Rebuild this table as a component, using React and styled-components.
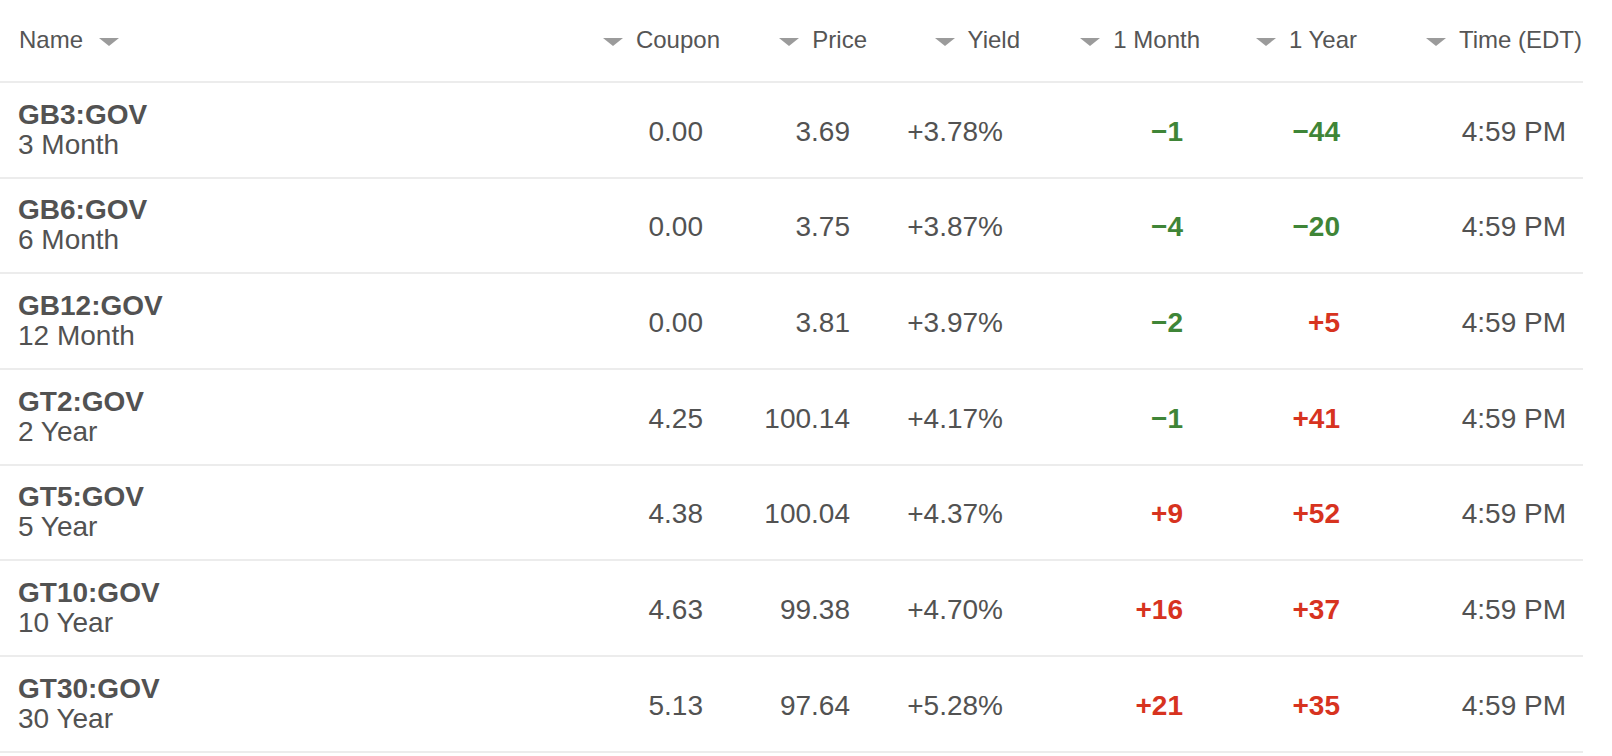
import styled, { createGlobalStyle } from "styled-components";

const GlobalStyle = createGlobalStyle`
   html, body {
      margin: 0;
      padding: 0;
      background: #fff;
   }
   body {
      font-family: "Liberation Sans", Arial, Helvetica, sans-serif;
      color: #525252;
   }
`;

const COLUMNS = "580px 140px 147px 153px 180px 157px 226px";

const Table = styled.div`
   width: 1583px;
`;

const HeaderRow = styled.div`
   display: grid;
   grid-template-columns: ${COLUMNS};
   height: 83px;
   box-sizing: border-box;
   border-bottom: 2px solid #ececec;
`;

const HeaderCell = styled.div`
   display: flex;
   align-items: center;
   justify-content: ${(p) => (p.$left ? "flex-start" : "flex-end")};
   padding: 0 ${(p) => (p.$last ? "1px" : "0")} 1px ${(p) => (p.$left ? "19px" : "0")};
   font-size: 24px;
   line-height: 28px;
   color: #555;
   white-space: nowrap;
`;

const SortArrow = styled.svg`
   width: 20px;
   height: 8px;
   flex: none;
   margin-right: ${(p) => (p.$after ? "0" : "13px")};
   margin-left: ${(p) => (p.$after ? "16px" : "0")};
   margin-top: 3px;
   fill: #9b9b9b;
`;

const Row = styled.div`
   display: grid;
   grid-template-columns: ${COLUMNS};
   height: 95.67px;
   box-sizing: border-box;
   border-bottom: 2px solid #ececec;
`;

const NameCell = styled.div`
   display: flex;
   flex-direction: column;
   justify-content: center;
   padding-left: 18px;
   font-size: 28px;
   line-height: 30px;
   color: #525252;
`;

const Ticker = styled.span`
   font-weight: 700;
`;

const ValueCell = styled.div`
   display: flex;
   align-items: center;
   justify-content: flex-end;
   padding: 4px 17px 0 0;
   font-size: 28px;
   line-height: 30px;
   white-space: nowrap;
   font-weight: ${(p) => (p.$change ? 700 : 400)};
   color: ${(p) =>
      p.$change ? (p.$change === "up" ? "#d7331f" : "#3f8537") : "#525252"};
`;

const rows = [
   ["GB3:GOV", "3 Month", "0.00", "3.69", "+3.78%", "−1", "−44"],
   ["GB6:GOV", "6 Month", "0.00", "3.75", "+3.87%", "−4", "−20"],
   ["GB12:GOV", "12 Month", "0.00", "3.81", "+3.97%", "−2", "+5"],
   ["GT2:GOV", "2 Year", "4.25", "100.14", "+4.17%", "−1", "+41"],
   ["GT5:GOV", "5 Year", "4.38", "100.04", "+4.37%", "+9", "+52"],
   ["GT10:GOV", "10 Year", "4.63", "99.38", "+4.70%", "+16", "+37"],
   ["GT30:GOV", "30 Year", "5.13", "97.64", "+5.28%", "+21", "+35"],
];

const heads = ["Coupon", "Price", "Yield", "1 Month", "1 Year", "Time (EDT)"];

function Arrow({ after }) {
   return (
      <SortArrow $after={after} viewBox="0 0 20 8">
         <polygon points="0,0 20,0 10,8" />
      </SortArrow>
   );
}

const dir = (v) => (v.startsWith("+") ? "up" : "down");

export default function App() {
   return (
      <>
         <GlobalStyle />
         <Table>
            <HeaderRow>
               <HeaderCell $left>
                  Name
                  <Arrow after />
               </HeaderCell>
               {heads.map((h, i) => (
                  <HeaderCell key={h} $last={i === heads.length - 1}>
                     <Arrow />
                     {h}
                  </HeaderCell>
               ))}
            </HeaderRow>
            {rows.map(([ticker, term, coupon, price, yld, month, year]) => (
               <Row key={ticker}>
                  <NameCell>
                     <Ticker>{ticker}</Ticker>
                     <span>{term}</span>
                  </NameCell>
                  <ValueCell>{coupon}</ValueCell>
                  <ValueCell>{price}</ValueCell>
                  <ValueCell>{yld}</ValueCell>
                  <ValueCell $change={dir(month)}>{month}</ValueCell>
                  <ValueCell $change={dir(year)}>{year}</ValueCell>
                  <ValueCell>4:59 PM</ValueCell>
               </Row>
            ))}
         </Table>
      </>
   );
}
